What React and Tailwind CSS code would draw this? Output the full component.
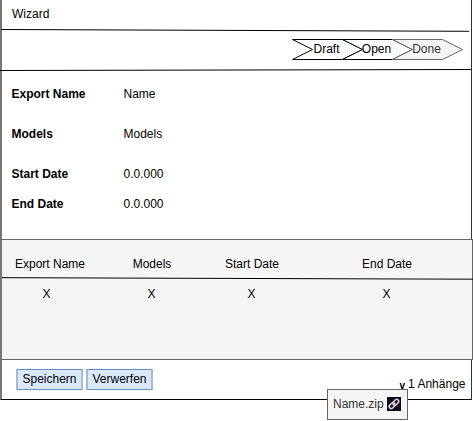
import React from 'react';

const details = [
  { label: 'Export Name', value: 'Name', row: 'h-10' },
  { label: 'Models', value: 'Models', row: 'h-10' },
  { label: 'Start Date', value: '0.0.000', row: 'h-[30px]' },
  { label: 'End Date', value: '0.0.000', row: 'h-[30px]' },
];

const columns = ['Export Name', 'Models', 'Start Date', 'End Date'];

function Rule({ y1, y2, x2 = 471, className = '' }) {
  return (
    <svg className={`block h-[3px] w-[473px] shrink-0 ${className}`} viewBox="0 0 473 3">
      <line x1="0" y1={y1} x2={x2} y2={y2} stroke="#000" />
    </svg>
  );
}

function Step({ label, muted }) {
  return (
    <div className="relative -mr-[21px] h-[21px] w-[71px] shrink-0">
      <svg className="block h-[21px] w-[71px]" viewBox="0 0 71 21">
        <path
          d="M0.5 0.5H50.5L70.5 10.5L50.5 20.5H0.5L20.5 10.5Z"
          fill={muted ? '#f5f5f5' : '#fff'}
          stroke={muted ? '#666' : '#000'}
        />
      </svg>
      <span
        className={`absolute inset-0 flex items-center justify-center pr-[2px] pb-px leading-[14px] ${
          muted ? 'text-[#333]' : 'text-black'
        }`}
      >
        {label}
      </span>
    </div>
  );
}

function ActionButton({ children }) {
  return (
    <button className="h-[21px] w-[67px] border border-x-2 border-x-[#a3b9de] border-y-[#6c8ebf] bg-[#dae8fc] pb-px leading-[14px]">
      {children}
    </button>
  );
}

export default function App() {
  return (
    <div className="relative h-[421px] w-[473px] overflow-hidden bg-white font-['Liberation_Sans',Arial,sans-serif] text-xs text-black">
      <main className="flex h-[400px] w-[473px] flex-col">
        <div className="flex h-[239px] w-[472px] flex-col border-l-2 border-r border-l-[#777] border-r-[#333]">
          <header className="flex h-[29px] shrink-0 items-center pb-px pl-[10px]">
            <h1 className="leading-[14px]">Wizard</h1>
          </header>
          <Rule className="-ml-px" y1={0.5} y2={2.3} x2={468} />
          <nav className="flex h-[37px] shrink-0 items-start pt-[7px] pl-[290px]">
            <Step label="Draft" />
            <Step label="Open" />
            <Step label="Done" muted />
          </nav>
          <Rule className="-ml-[2px]" y1={1.5} y2={0.5} />
          <dl className="pt-[2px]">
            {details.map(({ label, value, row }) => (
              <div key={label} className={`flex items-start ${row}`}>
                <dt className="w-[112px] pt-[13px] pl-[9.5px] leading-[14px] font-bold whitespace-nowrap">{label}</dt>
                <dd className="pt-[13px] pl-[9.5px] leading-[14px]">{value}</dd>
              </div>
            ))}
          </dl>
        </div>

        <section className="flex h-[121px] w-[473px] shrink-0 flex-col border border-l-2 border-[#666] border-l-[#777] bg-[#f5f5f5]">
          <div className="grid h-[37px] shrink-0 grid-cols-[96px_108px_92px_174px] pt-[17px] text-center leading-[14px]">
            {columns.map((name, i) => (
              <span key={name} className={i === 3 ? 'pl-[4px]' : ''}>
                {name}
              </span>
            ))}
          </div>
          <Rule y1={0.7} y2={2.2} />
          <div className="grid grid-cols-[89px_121px_79px_191px] pt-[7px] text-center leading-[14px]">
            {columns.map((name) => (
              <span key={name}>X</span>
            ))}
          </div>
        </section>

        <footer className="flex h-10 w-[472px] shrink-0 items-start border-r border-b border-l-2 border-b-black border-l-[#777] border-r-[#333]">
          <div className="flex gap-[3px] pt-[9px] pl-[14px]">
            <ActionButton>Speichern</ActionButton>
            <ActionButton>Verwerfen</ActionButton>
          </div>
          <div className="ml-auto flex items-start gap-[3px] pt-[17px] pr-[5.5px] leading-[14px]">
            <span className="pt-[2px] text-[10px] font-bold">v</span>
            <span>1 Anhänge</span>
          </div>
        </footer>
      </main>

      <div className="absolute top-[389px] left-[327px] flex h-[31px] w-[81px] items-center border border-[#666] bg-[#f5f5f5] pl-[5px] text-[#333]">
        <span className="w-[54px] pb-px leading-[14px]">Name.zip</span>
        <svg className="-mt-px h-[14px] w-[14px]" viewBox="0 0 14 14">
          <rect width="14" height="14" fill="#0c0c18" />
          <g fill="none" stroke="#e0cde2" strokeWidth="1.5">
            <rect x="1.8" y="6.6" width="6.6" height="4" rx="2" transform="rotate(-45 5.1 8.6)" />
            <rect x="5.5" y="3.3" width="6.6" height="4" rx="2" transform="rotate(-45 8.8 5.3)" />
          </g>
        </svg>
      </div>
    </div>
  );
}
